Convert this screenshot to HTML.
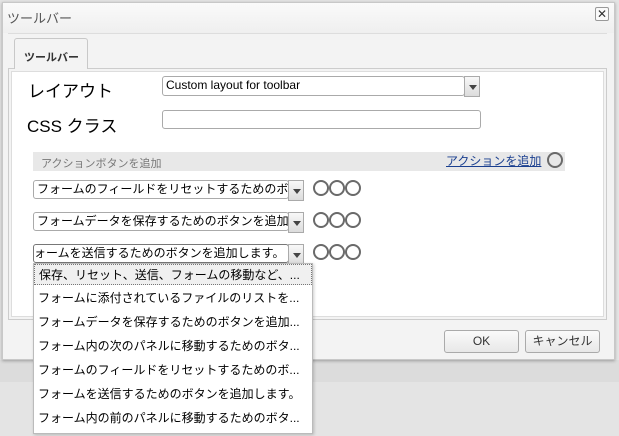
<!DOCTYPE html>
<html><head><meta charset="utf-8"><style>
*{box-sizing:border-box;margin:0;padding:0}
body{width:619px;height:436px;position:relative;overflow:hidden;background:#e4e4e4;font-family:"Liberation Sans","Noto Sans CJK JP",sans-serif;color:#000}
.a{position:absolute}
.dlg{left:2px;top:2px;width:613px;height:358px;background:#f3f3f3;border:1px solid #c8c8c8;box-shadow:0 1px 3px rgba(0,0,0,.3)}
.sel{background:#fff;border:1px solid #aaa;border-radius:3px;font-size:12px;line-height:17px;padding-left:3px;white-space:nowrap;overflow:hidden}
.btn{background:linear-gradient(#f8f8f8,#dcdcdc);border:1px solid #aaa;width:16px;height:21px}
.btn:after{content:"";position:absolute;left:4px;top:8px;border-left:4px solid transparent;border-right:4px solid transparent;border-top:5px solid #444}
.c{width:16px;height:16px;border:2.5px solid #6a6a6a;border-radius:50%}
.item{left:34px;width:278px;height:21px;font-size:12px;line-height:21px;padding-left:4px;white-space:nowrap;overflow:hidden}
.pb{background:linear-gradient(#fafafa,#e8e8e8);border:1px solid #aaa;border-radius:3px;font-size:12px;text-align:center;line-height:20px;color:#333}
</style></head><body>
<div class="a" style="left:0;top:360px;width:619px;height:22px;background:#dcdcdc"></div>
<div class="a dlg"></div>
<div class="a" style="left:3px;top:3px;width:611px;height:30px;background:linear-gradient(#fafafa,#efefef)"></div>
<div class="a" style="left:7px;top:8px;font-size:13px;color:#555">ツールバー</div>
<div class="a" style="left:595px;top:7px;width:14px;height:14px;border:1px solid #999;border-radius:2px;background:#fafafa;font-size:12px;line-height:12px;text-align:center;color:#333">✕</div>
<div class="a" style="left:8px;top:33px;width:599px;height:1px;background:#ddd"></div>
<div class="a" style="left:8px;top:68px;width:599px;height:252px;border:1px solid #ccc;background:#f3f3f3"></div>
<div class="a" style="left:11px;top:71px;width:593px;height:246px;background:#fff;border:1px solid #ddd"></div>
<div class="a" style="left:14px;top:38px;width:74px;height:31px;border:1px solid #c8c8c8;border-bottom:none;border-radius:3px 3px 0 0;background:#f3f3f3;font-size:11px;font-weight:bold;color:#333;padding:10px 0 0 9px">ツールバー</div>
<div class="a" style="left:28px;top:77px;font-size:17px">レイアウト</div>
<div class="a sel" style="left:162px;top:76px;width:303px;height:20px;font-size:12px">Custom layout for toolbar</div>
<div class="a btn" style="left:464px;top:76px;height:21px"></div>
<div class="a" style="left:27px;top:112px;font-size:17px">CSS クラス</div>
<div class="a sel" style="left:162px;top:110px;width:319px;height:19px"></div>
<div class="a" style="left:33px;top:152px;width:532px;height:19px;background:#e8e8e8;font-size:11px;color:#777;padding:3px 0 0 8px">アクションボタンを追加</div>
<div class="a" style="left:446px;top:152px;font-size:12px;color:#1a3f8f;text-decoration:underline">アクションを追加</div>
<div class="a c" style="left:547px;top:152px"></div>

<div class="a sel" style="left:33px;top:180px;width:256px;height:19px">フォームのフィールドをリセットするためのボ</div>
<div class="a btn" style="left:288px;top:180px"></div>
<div class="a c" style="left:313px;top:180px"></div><div class="a c" style="left:329px;top:180px"></div><div class="a c" style="left:345px;top:180px"></div>

<div class="a sel" style="left:33px;top:212px;width:256px;height:19px">フォームデータを保存するためのボタンを追加</div>
<div class="a btn" style="left:288px;top:212px"></div>
<div class="a c" style="left:313px;top:212px"></div><div class="a c" style="left:329px;top:212px"></div><div class="a c" style="left:345px;top:212px"></div>

<div class="a sel" style="left:33px;top:244px;width:256px;height:19px;border-color:#777;padding-left:0">ォームを送信するためのボタンを追加します。</div>
<div class="a btn" style="left:288px;top:244px"></div>
<div class="a c" style="left:313px;top:244px"></div><div class="a c" style="left:329px;top:244px"></div><div class="a c" style="left:345px;top:244px"></div>

<div class="a pb" style="left:444px;top:330px;width:75px;height:23px">OK</div>
<div class="a pb" style="left:525px;top:330px;width:75px;height:23px">キャンセル</div>

<div class="a" style="left:33px;top:263px;width:280px;height:171px;background:#fff;border:1px solid #bbb;box-shadow:1px 1px 3px rgba(0,0,0,.2)"></div>
<div class="a item" style="top:264px;background:#f0f0f0;border:1px dotted #777">保存、リセット、送信、フォームの移動など、...</div>
<div class="a item" style="top:288px">フォームに添付されているファイルのリストを...</div>
<div class="a item" style="top:312px">フォームデータを保存するためのボタンを追加...</div>
<div class="a item" style="top:336px">フォーム内の次のパネルに移動するためのボタ...</div>
<div class="a item" style="top:360px">フォームのフィールドをリセットするためのボ...</div>
<div class="a item" style="top:384px">フォームを送信するためのボタンを追加します。</div>
<div class="a item" style="top:408px">フォーム内の前のパネルに移動するためのボタ...</div>
</body></html>
